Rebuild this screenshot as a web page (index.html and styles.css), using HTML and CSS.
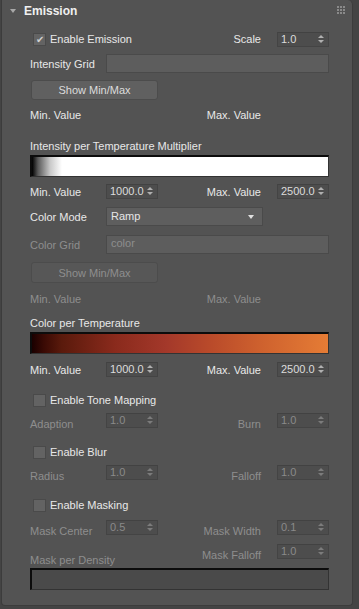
FILE: index.html
```html
<!DOCTYPE html>
<html lang="en">
<head>
  <meta charset="UTF-8">
  <title>Emission</title>
  <link rel="stylesheet" href="styles.css">
</head>
<body>
  <div class="rollout">
    <!-- Header -->
    <div class="rollout-head">
      <span class="twirl"></span>
      <span class="title">Emission</span>
      <span class="grip"><i></i><i></i><i></i><i></i><i></i><i></i><i></i><i></i><i></i></span>
    </div>

    <div class="rollout-body">
      <div class="row r-enable">
        <label class="check"><span class="box checked">&#10004;</span>Enable Emission</label>
        <span class="spacer"></span>
        <span class="rlabel">Scale</span>
        <span class="spin">1.0<b></b></span>
      </div>

      <div class="row r-field">
        <span class="label">Intensity Grid</span>
        <span class="field"></span>
      </div>

      <div class="row r-btn"><button class="btn">Show Min/Max</button></div>

      <div class="row r-text r-minmax">
        <span class="label">Min. Value</span>
        <span class="spacer"></span>
        <span class="rlabel wide">Max. Value</span>
      </div>

      <div class="row r-text r-caption"><span>Intensity per Temperature Multiplier</span></div>
      <div class="ramp ramp-intensity"></div>

      <div class="row r-spin">
        <span class="label">Min. Value</span>
        <span class="spin">1000.0<b></b></span>
        <span class="spacer"></span>
        <span class="rlabel">Max. Value</span>
        <span class="spin">2500.0<b></b></span>
      </div>

      <div class="row r-drop">
        <span class="label">Color Mode</span>
        <span class="drop">Ramp<b></b></span>
      </div>

      <div class="row r-field2 off">
        <span class="label">Color Grid</span>
        <span class="field">color</span>
      </div>

      <div class="row r-btn2 off"><button class="btn">Show Min/Max</button></div>

      <div class="row r-text r-minmax2 off">
        <span class="label">Min. Value</span>
        <span class="spacer"></span>
        <span class="rlabel wide">Max. Value</span>
      </div>

      <div class="row r-text r-caption2"><span>Color per Temperature</span></div>
      <div class="ramp ramp-color"></div>

      <div class="row r-spin r-spin2">
        <span class="label">Min. Value</span>
        <span class="spin">1000.0<b></b></span>
        <span class="spacer"></span>
        <span class="rlabel">Max. Value</span>
        <span class="spin">2500.0<b></b></span>
      </div>

      <div class="row r-check r-tone">
        <label class="check"><span class="box"></span>Enable Tone Mapping</label>
      </div>
      <div class="row r-spin r-sub off">
        <span class="label low">Adaption</span>
        <span class="spin">1.0<b></b></span>
        <span class="spacer"></span>
        <span class="rlabel low">Burn</span>
        <span class="spin">1.0<b></b></span>
      </div>

      <div class="row r-check r-blur">
        <label class="check"><span class="box"></span>Enable Blur</label>
      </div>
      <div class="row r-spin r-sub off">
        <span class="label low">Radius</span>
        <span class="spin">1.0<b></b></span>
        <span class="spacer"></span>
        <span class="rlabel low">Falloff</span>
        <span class="spin">1.0<b></b></span>
      </div>

      <div class="row r-check r-mask">
        <label class="check"><span class="box"></span>Enable Masking</label>
      </div>
      <div class="row r-spin r-mask1 off">
        <span class="label low">Mask Center</span>
        <span class="spin">0.5<b></b></span>
        <span class="spacer"></span>
        <span class="rlabel low">Mask Width</span>
        <span class="spin">0.1<b></b></span>
      </div>
      <div class="row r-spin r-mask2 off">
        <span class="label lower">Mask per Density</span>
        <span class="spacer"></span>
        <span class="rlabel low">Mask Falloff</span>
        <span class="spin">1.0<b></b></span>
      </div>
      <div class="ramp ramp-mask"></div>
    </div>
  </div>
</body>
</html>
```

FILE: styles.css
```css
body {
  margin: 0;
  background: #444444;
  font-family: 'Liberation Sans', Arial, sans-serif;
  font-size: 11px;
  color: #e8e8e8;
  width: 359px;
  height: 609px;
  overflow: hidden;
}

.rollout {
  width: 352px;
  height: 606px;
  margin-left: 1px;
  background: #535353;
  border: 1px solid #3c3c3c;
  border-top: none;
  border-radius: 0 5px 4px 4px;
  box-sizing: border-box;
}

.rollout-head {
  height: 22px;
  display: flex;
  align-items: center;
  position: relative;
}

.twirl {
  width: 0;
  height: 0;
  margin-left: 8px;
  margin-right: 8px;
  border-left: 3px solid transparent;
  border-right: 3px solid transparent;
  border-top: 4px solid #a8a8a8;
}

.title {
  font-weight: bold;
  font-size: 12px;
  color: #f0f0f0;
}

.grip {
  position: absolute;
  right: 7px;
  top: 6px;
  width: 8px;
  display: flex;
  flex-wrap: wrap;
  gap: 1px;
}

.grip i {
  width: 2px;
  height: 2px;
  background: #8a8a8a;
}

.rollout-body {
  padding-left: 28px;
  width: 299px;
}

.row {
  display: flex;
  align-items: center;
}

.spacer { flex: 1; }

.label {
  width: 76px;
  flex: none;
  white-space: nowrap;
}

.rlabel {
  margin-right: 16px;
  white-space: nowrap;
}

.rlabel.wide { margin-right: 68px; }

.low { padding-top: 7px; }
.lower { padding-top: 16px; }

.off { color: #8e8e8e; }

/* checkbox */
.check {
  display: flex;
  align-items: center;
  margin-left: 3px;
}

.box {
  width: 11px;
  height: 11px;
  background: #636363;
  border: 1px solid #4a4a4a;
  margin-right: 4px;
  color: #d0d0d0;
  font-size: 10px;
  line-height: 11px;
  text-align: center;
}

/* spinner */
.spin {
  width: 52px;
  height: 15px;
  box-sizing: border-box;
  flex: none;
  background: #4d4d4d;
  border: 1px solid #444;
  border-top-color: #424242;
  padding-left: 3px;
  line-height: 13px;
  position: relative;
  color: #dcdcdc;
}

.off .spin { color: #8a8a8a; }

.spin b {
  position: absolute;
  right: 4px;
  top: 2px;
  width: 0;
  height: 0;
  border-left: 3px solid transparent;
  border-right: 3px solid transparent;
  border-bottom: 3px solid #b0b0b0;
}

.spin b::after {
  content: "";
  position: absolute;
  left: -3px;
  top: 5px;
  border-left: 3px solid transparent;
  border-right: 3px solid transparent;
  border-top: 3px solid #b0b0b0;
}

.off .spin b { border-bottom-color: #7c7c7c; }
.off .spin b::after { border-top-color: #7c7c7c; }

/* text field */
.field {
  flex: 1;
  height: 19px;
  box-sizing: border-box;
  background: #5d5d5d;
  border: 1px solid #4a4a4a;
  padding-left: 4px;
  line-height: 15px;
}

.drop {
  width: 157px;
  height: 19px;
  box-sizing: border-box;
  background: #5e5e5e;
  border: 1px solid #4a4a4a;
  padding-left: 4px;
  line-height: 16px;
  position: relative;
  color: #e6e6e6;
}

.drop b {
  position: absolute;
  right: 8px;
  top: 7px;
  border-left: 3px solid transparent;
  border-right: 3px solid transparent;
  border-top: 4px solid #e0e0e0;
}

.btn {
  width: 127px;
  height: 21px;
  margin-left: 1px;
  background: #606060;
  border: 1px solid #4c4c4c;
  border-radius: 3px;
  color: #dcdcdc;
  font-family: inherit;
  font-size: 11px;
  padding: 0;
}

.r-btn .btn { height: 20px; }

.off .btn {
  background: #575757;
  color: #8e8e8e;
}

/* row placement */
.r-enable { margin-top: 9px; height: 16px; }
.r-field { margin-top: 7px; }
.r-btn { margin-top: 7px; height: 20px; }
.r-text { height: 14px; }
.r-minmax { margin-top: 8px; }
.r-caption { margin-top: 17px; }
.r-spin { height: 15px; margin-top: 7px; }
.r-drop { margin-top: 8px; height: 19px; }
.r-field2 { margin-top: 9px; }
.r-btn2 { margin-top: 8px; height: 21px; }
.r-minmax2 { margin-top: 9px; }
.r-caption2 { margin-top: 10px; }
.r-spin2 { margin-top: 8px; }
.r-check { height: 16px; }
.r-tone { margin-top: 15px; }
.r-blur { margin-top: 16px; }
.r-mask { margin-top: 17px; }
.r-sub { margin-top: 5px; }
.r-mask1 { margin-top: 7px; }
.r-mask2 { margin-top: 9px; }

.ramp {
  height: 22px;
  box-sizing: border-box;
  border-top: 2px solid #0c0c0c;
  border-left: 2px solid #0c0c0c;
  border-right: 1px solid #333;
  border-bottom: 1px solid #333;
  margin-top: 2px;
}

.ramp-intensity {
  background: linear-gradient(to right, #000 0, #5a5a5a 6px, #c8c8c8 18px, #fff 30px, #fff 100%);
}

.ramp-color {
  background: linear-gradient(to right, #1a0000 0%, #3a0a04 4%, #5a1a0c 10%, #8a2a1c 28%, #a3382a 45%, #b94a2a 60%, #cf622e 78%, #e57c35 100%);
}

.ramp-mask {
  margin-top: 9px;
  background: #4a4a4a;
}
```
